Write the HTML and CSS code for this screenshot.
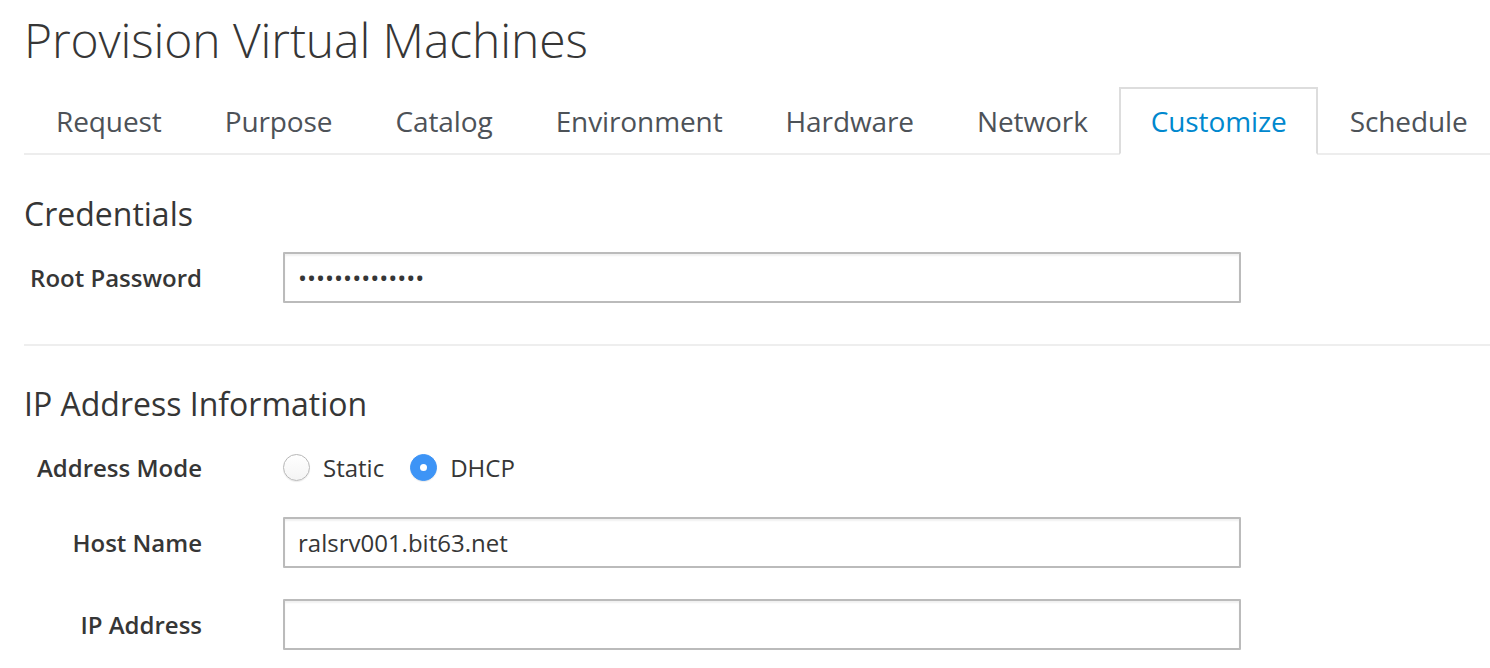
FILE: index.html
```html
<!DOCTYPE html>
<html lang="en">
<head>
<meta charset="utf-8">
<title>Provision Virtual Machines</title>
<link rel="stylesheet" href="styles.css">
</head>
<body>
<div class="page">
  <h1 class="title">Provision Virtual Machines</h1>
  <ul class="tabs">
    <li class="tab"><a href="#">Request</a></li>
    <li class="tab"><a href="#">Purpose</a></li>
    <li class="tab"><a href="#">Catalog</a></li>
    <li class="tab"><a href="#">Environment</a></li>
    <li class="tab"><a href="#">Hardware</a></li>
    <li class="tab"><a href="#">Network</a></li>
    <li class="tab active"><a href="#">Customize</a></li>
    <li class="tab"><a href="#">Schedule</a></li>
  </ul>

  <section class="section">
    <h2 class="section-title">Credentials</h2>
    <div class="row row-first">
      <label class="label" for="rootpw">Root Password</label>
      <input class="input" id="rootpw" type="password" value="abcdefghijklmn">
    </div>
  </section>

  <hr class="divider">

  <section class="section">
    <h2 class="section-title">IP Address Information</h2>
    <div class="row row-first row-radio">
      <span class="label">Address Mode</span>
      <div class="radios">
        <label class="radio"><span class="radio-dot"></span>Static</label>
        <label class="radio"><span class="radio-dot checked"></span>DHCP</label>
      </div>
    </div>
    <div class="row row-host">
      <label class="label" for="host">Host Name</label>
      <input class="input" id="host" type="text" value="ralsrv001.bit63.net">
    </div>
    <div class="row row-ip">
      <label class="label" for="ip">IP Address</label>
      <input class="input" id="ip" type="text" value="">
    </div>
  </section>
</div>
</body>
</html>
```

FILE: styles.css
```css
* { box-sizing: border-box; }

html, body {
  margin: 0;
  padding: 0;
  background: #fff;
}

body {
  font-family: "Open Sans", "Liberation Sans", sans-serif;
  color: #363636;
  overflow: hidden;
}

.page {
  padding-left: 24px;
}

.title {
  margin: 0;
  padding-top: 14px;
  font-size: 48px;
  font-weight: 300;
  line-height: 1.1;
  color: #363636;
  letter-spacing: -0.1px;
}

.tabs {
  list-style: none;
  margin: 20px 0 0 0;
  padding: 0 0 0 1px;
  display: flex;
  border-bottom: 2px solid #ededed;
}

.tab {
  margin-bottom: -2px;
}

.tab:first-child {
  margin-left: -1px;
}

.tab a {
  display: block;
  padding: 12px 29px 12px 30px;
  border: 2px solid transparent;
  font-size: 28px;
  line-height: 40px;
  color: #4d5258;
  text-decoration: none;
  letter-spacing: -0.1px;
}

.tab.active a {
  color: #0088ce;
  background: #fff;
  border-color: #dddddd;
  border-bottom-color: #fff;
}

.section-title {
  margin: 0;
  font-size: 32px;
  font-weight: 400;
  line-height: 1.1;
  color: #363636;
}

.section:first-of-type .section-title {
  margin-top: 41px;
}

.row {
  display: flex;
  align-items: center;
}

.row-first { margin-top: 21px; }
.row-host { margin-top: 24px; }
.row-ip { margin-top: 31px; }

.label {
  width: 178px;
  text-align: right;
  font-size: 24px;
  font-weight: 600;
  color: #363636;
  margin-right: 81px;
  flex: none;
}

.input {
  width: 958px;
  height: 51px;
  border: 2px solid #bbbbbb;
  border-radius: 1px;
  padding: 0 13px;
  font-family: "Open Sans", "Liberation Sans", sans-serif;
  font-size: 24px;
  color: #363636;
  background: #fff;
  box-shadow: inset 0 2px 2px rgba(3, 3, 3, 0.06);
  outline: none;
}

.divider {
  border: 0;
  border-top: 2px solid #eeeeee;
  margin: 41px 0 0 0;
}

.divider + .section .section-title {
  margin-top: 40px;
}

.row-radio {
  height: 51px;
}

.radios {
  display: flex;
  align-items: center;
  gap: 26px;
}

.radio {
  display: flex;
  align-items: center;
  gap: 13px;
  font-size: 24px;
  color: #363636;
}

.radio-dot {
  width: 27px;
  height: 27px;
  border-radius: 50%;
  border: 1px solid #b7b7b7;
  background: linear-gradient(#ffffff, #f4f4f4);
  box-shadow: 0 1px 1px rgba(0, 0, 0, 0.08);
  position: relative;
  flex: none;
}

.radio-dot.checked {
  background: #3d94f6;
  border-color: #3d94f6;
}

.radio-dot.checked::after {
  content: "";
  position: absolute;
  left: 50%;
  top: 50%;
  width: 7px;
  height: 7px;
  margin: -3.5px 0 0 -3.5px;
  border-radius: 50%;
  background: #fff;
}
```
